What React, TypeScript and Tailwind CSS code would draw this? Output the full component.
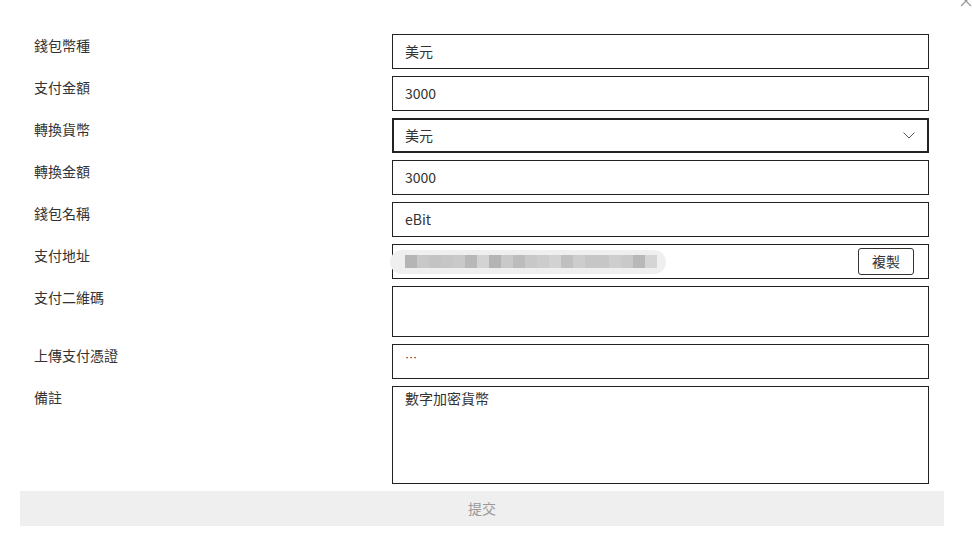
import { ReactNode } from "react";

const font = { fontFamily: '"Noto Sans CJK TC", "Noto Sans", sans-serif' };

// pixelated (mosaic) wallet address
const mosaic = [
  "#b5b5b5", "#c8c8c8", "#c3c3c3", "#c6c6c6", "#c9c9c9", "#b8b8b8", "#d3d3d3",
  "#b4b4b4", "#c9c9c9", "#bcbcbc", "#c8c8c8", "#cccccc", "#d2d2d2", "#c0c0c0",
  "#cdcdcd", "#c6c6c6", "#c6c6c6", "#cecece", "#c9c9c9", "#b8b8b8", "#d5d5d5",
];

const Row = ({ label, children }: { label: string; children: ReactNode }) => (
  <div className="flex items-start pl-[14px] mb-[7px]">
    <div className="w-[358px] text-[14px] leading-[22px] text-[#333]">{label}</div>
    {children}
  </div>
);

const Field = ({ value }: { value: string }) => (
  <div className="w-[537px] h-[35px] border border-[#222] flex items-center px-[12px] text-[14px] text-[#333]">
    {value}
  </div>
);

export default function App() {
  return (
    <div className="relative w-[972px] h-[551px] bg-white overflow-hidden" style={font}>
      <svg
        className="absolute left-[960px] top-[-5px]"
        width="12"
        height="12"
        viewBox="0 0 12 12"
        fill="none"
        stroke="#9a9a9a"
        strokeWidth="1.3"
      >
        <path d="M1 1l10 10M11 1L1 11" />
      </svg>

      <div className="px-[20px] pt-[34px]">
        <Row label="錢包幣種">
          <Field value="美元" />
        </Row>
        <Row label="支付金額">
          <Field value="3000" />
        </Row>
        <Row label="轉換貨幣">
          <div className="w-[537px] h-[35px] border-2 border-[#222] flex items-center justify-between pl-[11px] pr-[12px] text-[14px] text-[#333]">
            <span>美元</span>
            <svg width="12" height="7" viewBox="0 0 12 7" fill="none" stroke="#555" strokeWidth="1">
              <path d="M0.5 0.5L6 6l5.5-5.5" />
            </svg>
          </div>
        </Row>
        <Row label="轉換金額">
          <Field value="3000" />
        </Row>
        <Row label="錢包名稱">
          <Field value="eBit" />
        </Row>
        <Row label="支付地址">
          <div className="w-[537px] h-[35px] border border-[#222] flex items-center justify-between pr-[14px]">
            <div className="flex items-center h-[24px] ml-[-3px] pl-[15px] pr-[9px] bg-[#efefef] rounded-full">
              {mosaic.map((c, i) => (
                <div key={i} className="w-[12px] h-[13px]" style={{ backgroundColor: c }} />
              ))}
            </div>
            <button className="h-[27px] w-[56px] border border-[#333] rounded-[3px] text-[14px] text-[#333] bg-white">
              複製
            </button>
          </div>
        </Row>
        <Row label="支付二維碼">
          <div className="w-[537px] h-[51px] border border-[#222]" />
        </Row>
        <Row label="上傳支付憑證">
          <div
            className="w-[537px] h-[35px] border border-[#222] px-[12px] pt-[1px] text-[12px] leading-[22px] text-[#222]"
            style={{ fontFamily: '"Liberation Sans", sans-serif' }}
          >
            ···
          </div>
        </Row>
        <Row label="備註">
          <div className="w-[537px] h-[98px] border border-[#222] px-[12px] text-[14px] leading-[22px] text-[#333]">
            數字加密貨幣
          </div>
        </Row>
        <button className="w-[924px] h-[35px] bg-[#efefef] text-[14px] text-[#999]">提交</button>
      </div>
    </div>
  );
}
